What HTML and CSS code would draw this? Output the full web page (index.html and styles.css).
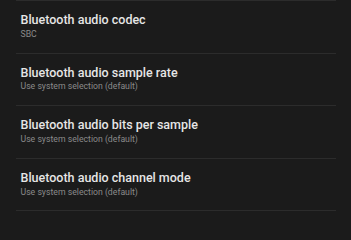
FILE: index.html
```html
<!DOCTYPE html>
<html>
<head>
<meta charset="utf-8">
<link rel="stylesheet" href="styles.css">
</head>
<body>
<div class="list">
  <div class="item">
    <div class="title">Bluetooth audio codec</div>
    <div class="summary">SBC</div>
  </div>
  <div class="item">
    <div class="title">Bluetooth audio sample rate</div>
    <div class="summary">Use system selection (default)</div>
  </div>
  <div class="item">
    <div class="title">Bluetooth audio bits per sample</div>
    <div class="summary">Use system selection (default)</div>
  </div>
  <div class="item">
    <div class="title">Bluetooth audio channel mode</div>
    <div class="summary">Use system selection (default)</div>
  </div>
</div>
</body>
</html>
```
FILE: styles.css
```css
html, body {
  margin: 0;
  padding: 0;
  background: #1b1b1b;
  height: 100%;
  overflow: hidden;
}
.list {
  margin: 0 15px 0 16px;
  border-top: 1px solid #2c2c2c;
  font-family: Roboto, "Noto Sans", sans-serif;
}
.item {
  box-sizing: border-box;
  height: 52.6px;
  border-bottom: 1px solid #2c2c2c;
  padding: 12px 0 0 4.5px;
}
.title {
  font-size: 12.5px;
  line-height: 14px;
  font-weight: 500;
  color: #e6e6e6;
}
.summary {
  margin-top: 1.8px;
  font-size: 8.7px;
  line-height: 11px;
  color: #8a8a8a;
}
```
